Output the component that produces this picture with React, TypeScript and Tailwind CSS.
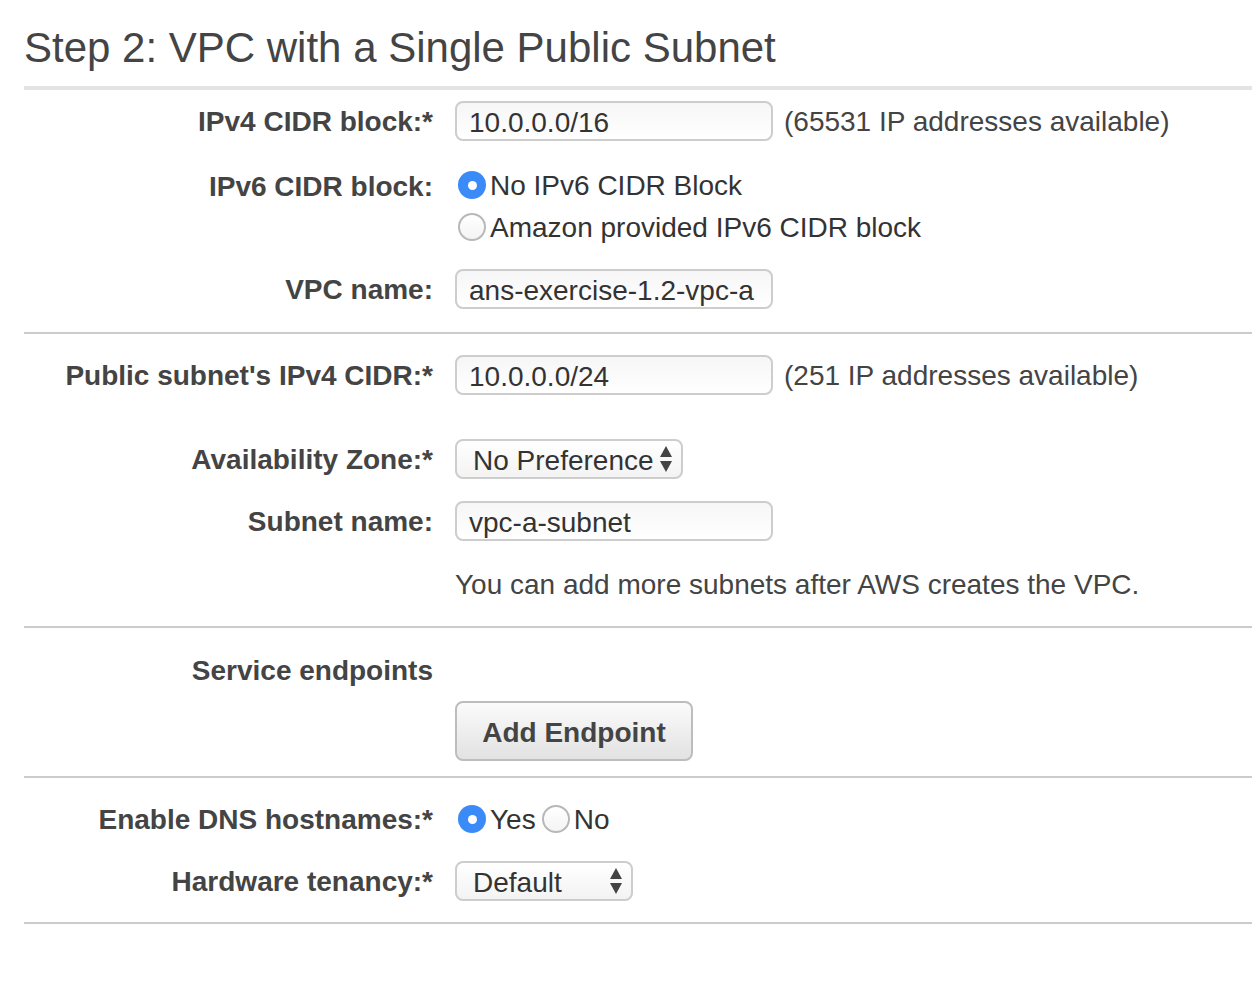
import React from "react";

const font = { fontFamily: '"Liberation Sans", Arial, Helvetica, sans-serif' };

function Label({ children }: { children: React.ReactNode }) {
  return (
    <div className="w-[409px] shrink-0 text-right font-bold text-[28px] leading-[40px] pt-[2px] text-[#444]">
      {children}
    </div>
  );
}

function TextInput({ value }: { value: string }) {
  return (
    <div className="w-[318px] h-[40px] rounded-[8px] border-2 border-[#cdcdcd] bg-gradient-to-b from-[#f6f6f6] to-white pl-[12px] pt-[3px] flex items-center text-[28px] text-[#333]">
      {value}
    </div>
  );
}

function SelectArrows() {
  return (
    <svg width="14" height="28" viewBox="0 0 14 28" className="shrink-0">
      <path d="M7 1 L13 12 L1 12 Z" fill="#444" />
      <path d="M1 16 L13 16 L7 27 Z" fill="#444" />
    </svg>
  );
}

function Select({ value, width }: { value: string; width: string }) {
  return (
    <div
      className={`${width} h-[40px] rounded-[8px] border-2 border-[#cdcdcd] bg-gradient-to-b from-white to-[#f3f3f3] pl-[16px] pr-[8px] flex items-center justify-between text-[28px] text-[#333]`}
    >
      <span className="pt-[3px]">{value}</span>
      <SelectArrows />
    </div>
  );
}

function Radio({ checked }: { checked?: boolean }) {
  if (checked) {
    return (
      <span className="w-[28px] h-[28px] rounded-full bg-[#3a8bf7] flex items-center justify-center shrink-0">
        <span className="w-[9px] h-[9px] rounded-full bg-white" />
      </span>
    );
  }
  return (
    <span className="w-[28px] h-[28px] rounded-full border-2 border-[#b8b8b8] bg-gradient-to-b from-white to-[#f4f4f4] shrink-0" />
  );
}

function Row({
  label,
  children,
  className = "",
}: {
  label?: React.ReactNode;
  children?: React.ReactNode;
  className?: string;
}) {
  return (
    <div className={`flex items-center gap-[22px] ${className}`}>
      <Label>{label}</Label>
      <div className="flex items-center">{children}</div>
    </div>
  );
}

function Divider({ className = "" }: { className?: string }) {
  return <div className={`h-[2px] bg-[#cccccc] ${className}`} />;
}

export default function App() {
  return (
    <div className="w-[1252px] h-[990px] bg-white text-[#444] pl-[24px]" style={font}>
      <h1 className="pt-[27px] text-[42px] leading-[42px] font-normal text-[#444]">
        Step 2: VPC with a Single Public Subnet
      </h1>
      <div className="mt-[17px] h-[4px] bg-[#e3e3e3]" />

      <Row label="IPv4 CIDR block:*" className="mt-[11px] h-[40px]">
        <TextInput value="10.0.0.0/16" />
        <span className="ml-[11px] pt-[2px] text-[28px] text-[#444]">
          (65531 IP addresses available)
        </span>
      </Row>

      <div className="mt-[23px] flex gap-[22px]">
        <Label>
          <div className="h-[42px] flex items-center justify-end">IPv6 CIDR block:</div>
        </Label>
        <div className="flex flex-col">
          <label className="h-[42px] flex items-center gap-[4px] pl-[3px] text-[28px] text-[#333]">
            <Radio checked />
            <span className="pt-[2px]">No IPv6 CIDR Block</span>
          </label>
          <label className="h-[42px] flex items-center gap-[4px] pl-[3px] text-[28px] text-[#333]">
            <Radio />
            <span className="pt-[2px]">Amazon provided IPv6 CIDR block</span>
          </label>
        </div>
      </div>

      <Row label="VPC name:" className="mt-[21px] h-[40px]">
        <TextInput value="ans-exercise-1.2-vpc-a" />
      </Row>

      <Divider className="mt-[23px]" />

      <Row label="Public subnet's IPv4 CIDR:*" className="mt-[21px] h-[40px]">
        <TextInput value="10.0.0.0/24" />
        <span className="ml-[11px] pt-[2px] text-[28px] text-[#444]">
          (251 IP addresses available)
        </span>
      </Row>

      <Row label="Availability Zone:*" className="mt-[44px] h-[40px]">
        <Select value="No Preference" width="w-[228px]" />
      </Row>

      <Row label="Subnet name:" className="mt-[22px] h-[40px]">
        <TextInput value="vpc-a-subnet" />
      </Row>

      <Row label="" className="mt-[23px] h-[40px]">
        <span className="pt-[2px] text-[28px] text-[#444]">
          You can add more subnets after AWS creates the VPC.
        </span>
      </Row>

      <Divider className="mt-[22px]" />

      <Row label="Service endpoints" className="mt-[22px] h-[40px]" />

      <Row label="" className="mt-[11px] h-[60px]">
        <button className="w-[238px] h-[60px] rounded-[8px] border-2 border-[#bdbdbd] bg-gradient-to-b from-[#fbfbfb] to-[#e2e2e2] pt-[3px] font-bold text-[28px] text-[#444]">
          Add Endpoint
        </button>
      </Row>

      <Divider className="mt-[15px]" />

      <Row label="Enable DNS hostnames:*" className="mt-[21px] h-[40px]">
        <label className="flex items-center gap-[4px] pl-[3px] text-[28px] text-[#333]">
          <Radio checked />
          <span className="pt-[2px]">Yes</span>
        </label>
        <label className="flex items-center gap-[4px] pl-[6px] text-[28px] text-[#333]">
          <Radio />
          <span className="pt-[2px]">No</span>
        </label>
      </Row>

      <Row label="Hardware tenancy:*" className="mt-[22px] h-[40px]">
        <Select value="Default" width="w-[178px]" />
      </Row>

      <Divider className="mt-[21px]" />
    </div>
  );
}
